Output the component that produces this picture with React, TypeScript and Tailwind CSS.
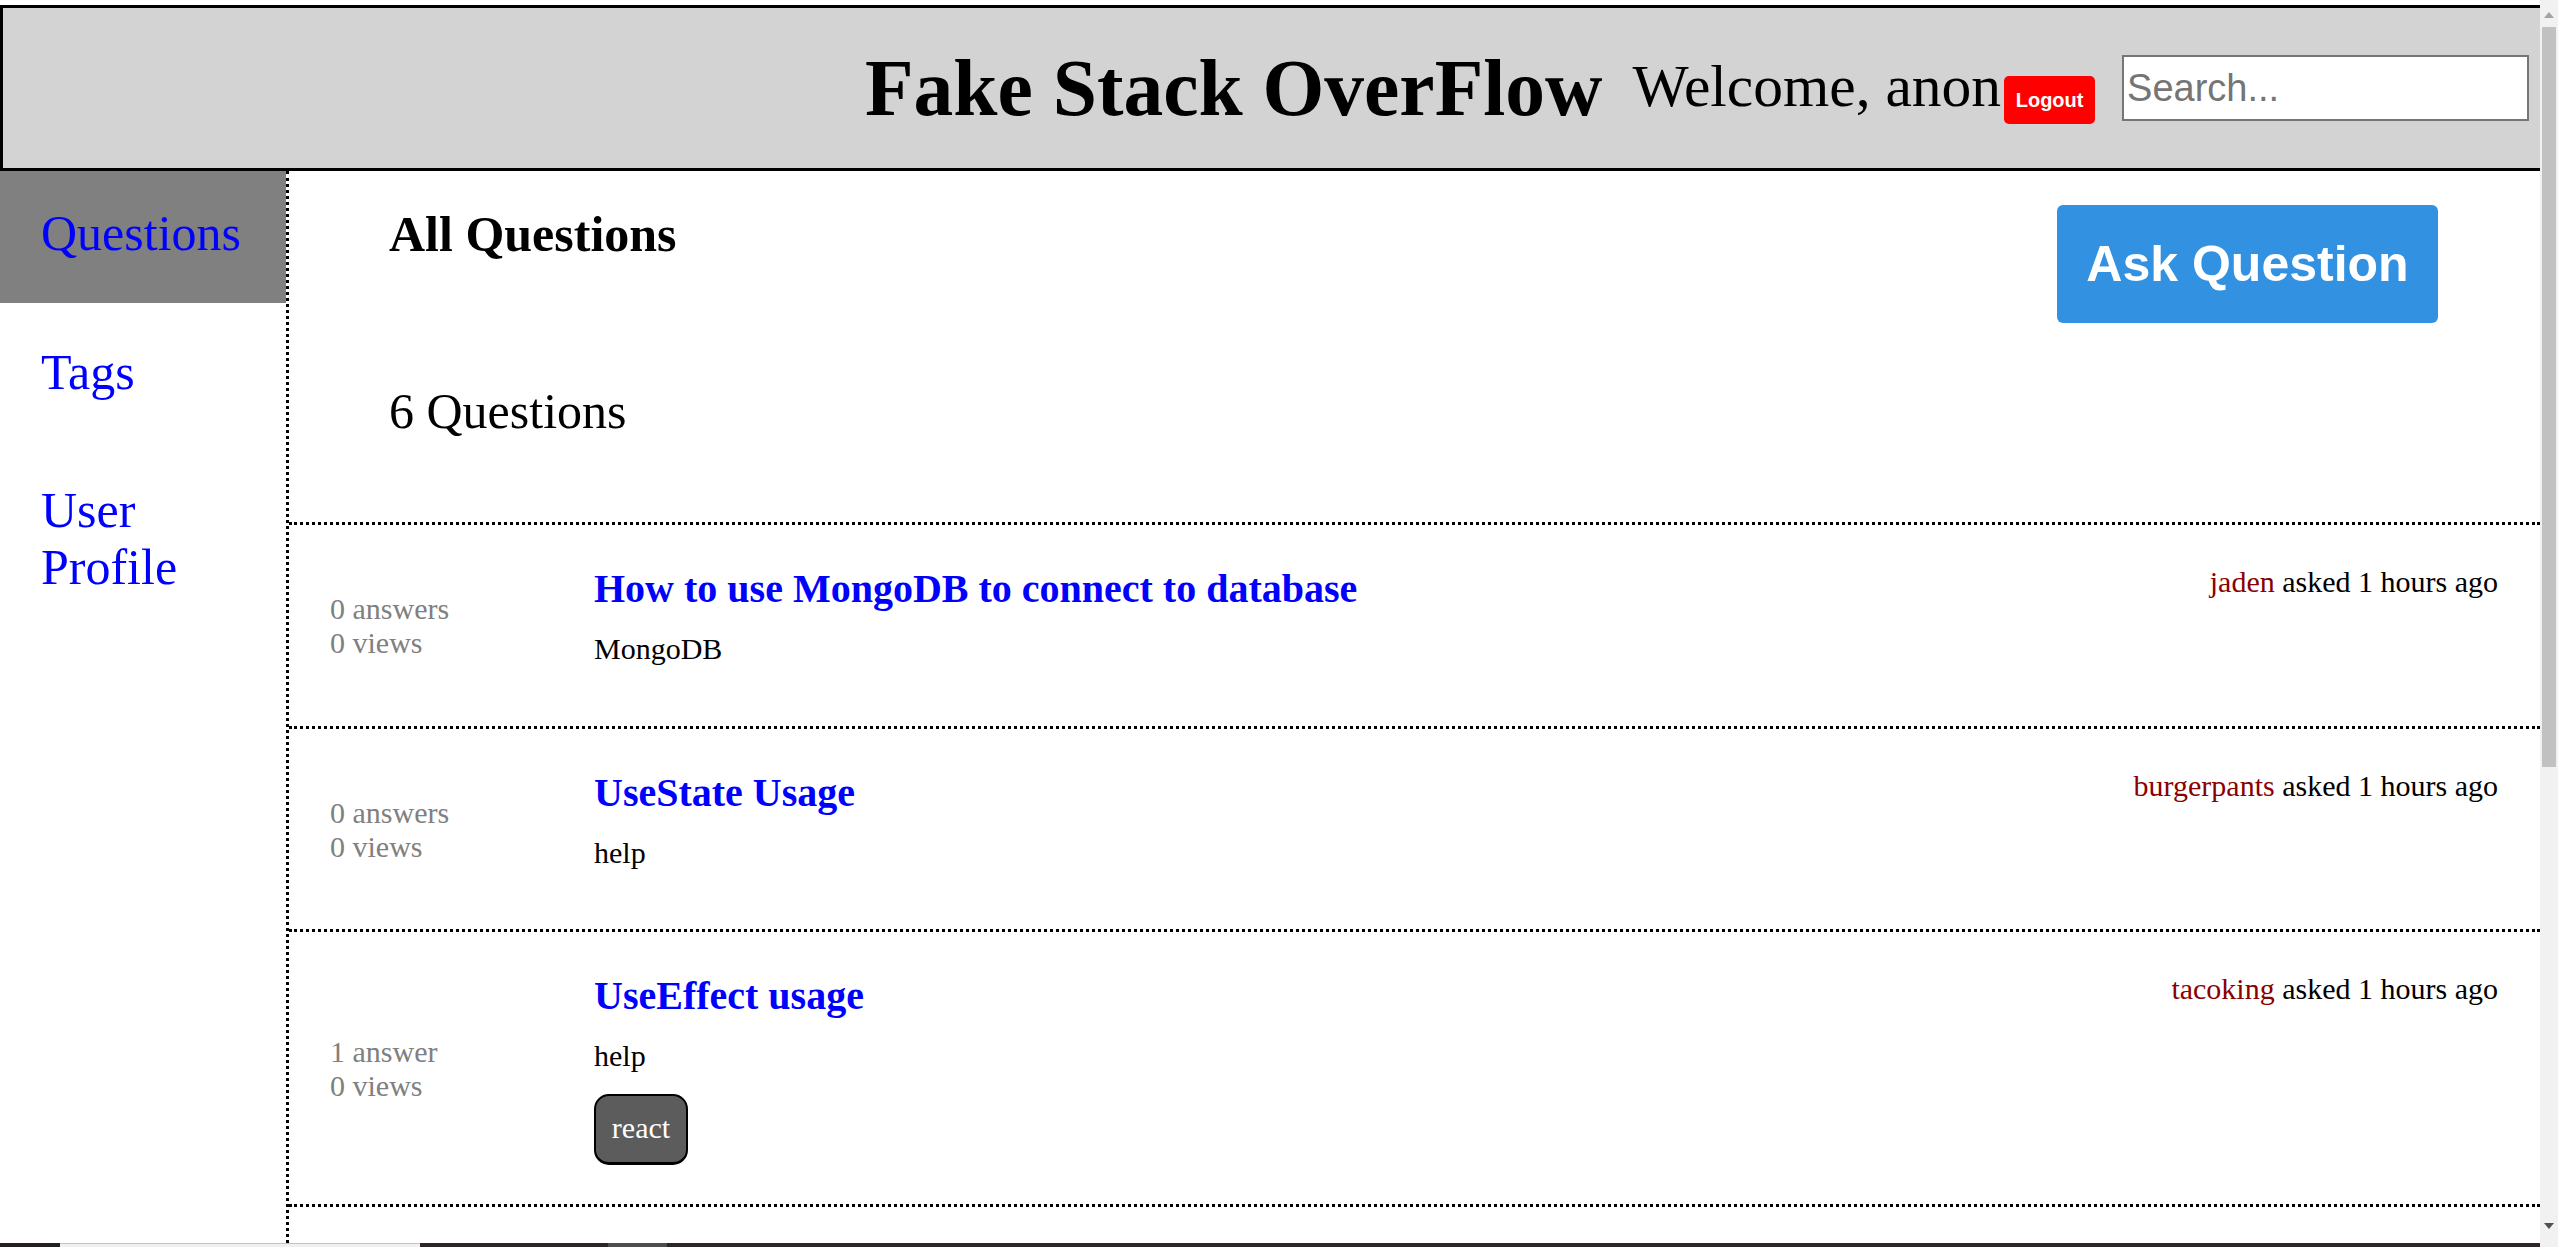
import React from "react";

const serif = "font-['Liberation_Serif','Times_New_Roman',serif]";
const sans = "font-['Liberation_Sans',Arial,sans-serif]";

type Q = {
  title: string;
  text: string;
  answers: string;
  views: string;
  user: string;
  tags: string[];
};

const questions: Q[] = [
  { title: "How to use MongoDB to connect to database", text: "MongoDB", answers: "0 answers", views: "0 views", user: "jaden", tags: [] },
  { title: "UseState Usage", text: "help", answers: "0 answers", views: "0 views", user: "burgerpants", tags: [] },
  { title: "UseEffect usage", text: "help", answers: "1 answer", views: "0 views", user: "tacoking", tags: ["react"] },
];

function QuestionRow({ q }: { q: Q }) {
  return (
    <div className="flex border-t-[3px] border-dotted border-black pl-[41px] pr-[42px] pt-[41px] pb-[39px]">
      <div className="w-[264px] shrink-0 self-center text-[30px] leading-[34px] text-[#808080]">
        <div>{q.answers}</div>
        <div>{q.views}</div>
      </div>
      <div className="flex-1 min-w-0">
        <div className="text-[40px] leading-[46px] font-bold text-[#0000ff]">{q.title}</div>
        <div className="mt-[20px] text-[30px] leading-[34.5px] text-black">{q.text}</div>
        <div className="mt-[20px] flex gap-[10px]">
          {q.tags.map((t) => (
            <div
              key={t}
              className="flex h-[71px] w-[94px] items-center justify-center rounded-[15px] border-2 border-b-[3px] border-black bg-[#5c5c5c] text-[30px] leading-[34.5px] text-white"
            >
              {t}
            </div>
          ))}
        </div>
      </div>
      <div className="-mt-[1px] self-start whitespace-nowrap text-right text-[30px] leading-[34.5px] text-black">
        <span className="text-[#8b0000]">{q.user}</span> asked 1 hours ago
      </div>
    </div>
  );
}

export default function App() {
  return (
    <div className={`flex h-[1247px] w-full overflow-hidden bg-white ${serif}`}>
      <div className="flex min-w-0 flex-1 flex-col">
        <div className="flex min-h-0 flex-1 flex-col overflow-hidden pt-[5px]">
          {/* Header */}
          <div className="flex h-[166px] shrink-0 items-center border-y-[3px] border-l-[3px] border-black bg-[#d3d3d3] pl-[862px]">
            <div className="whitespace-nowrap text-[79.5px] font-bold leading-[91px] text-black">Fake Stack OverFlow</div>
            <div className="ml-[30px] -mt-[4px] whitespace-nowrap text-[59.5px] leading-[68px] text-black">Welcome, anon</div>
            <button
              className={`ml-[3px] mt-[24px] flex h-[48px] w-[91px] items-center justify-center rounded-[5px] bg-[#ff0000] text-[20px] font-bold text-white ${sans}`}
            >
              Logout
            </button>
            <input
              type="text"
              placeholder="Search..."
              className={`ml-[27px] h-[66px] w-[407px] border-2 border-[#767676] bg-white px-[3px] text-[38px] text-black outline-none placeholder:text-[#757575] ${sans}`}
            />
          </div>

          {/* Body */}
          <div className="flex min-h-0 flex-1">
            {/* Sidebar */}
            <div className="w-[289px] shrink-0 border-r-[3px] border-dotted border-black">
              <div className="h-[132px] bg-[#808080] pl-[41px] pt-[34px] text-[50px] leading-[57.5px] text-[#0000ff]">Questions</div>
              <div className="h-[138px] pl-[41px] pt-[40.5px] text-[50px] leading-[57.5px] text-[#0000ff]">Tags</div>
              <div className="h-[160px] pl-[41px] pt-[40.5px] text-[50px] leading-[57.5px] text-[#0000ff]">
                <div className="max-w-[210px]">User Profile</div>
              </div>
            </div>

            {/* Main */}
            <div className="flex min-w-0 flex-1 flex-col">
              <div className="pl-[100px] pr-[102px] pt-[35px] pb-[81.5px]">
                <div className="flex items-start justify-between">
                  <div className="text-[50px] font-bold leading-[57.5px] text-black">All Questions</div>
                  <button
                    className={`-mt-[1px] flex h-[118px] w-[381px] items-center justify-center rounded-[6px] bg-[#3291e1] text-[50px] font-bold text-white ${sans}`}
                  >
                    Ask Question
                  </button>
                </div>
                <div className="mt-[60px] text-[50px] leading-[57.5px] text-black">6 Questions</div>
              </div>
              <div className="flex flex-col">
                {questions.map((q, i) => (
                  <QuestionRow key={i} q={q} />
                ))}
                <div className="h-[80px] border-t-[3px] border-dotted border-black" />
              </div>
            </div>
          </div>
        </div>
        {/* bottom strip */}
        <div className="flex h-[4px] shrink-0">
          <div className="w-[60px] bg-[#231f20]" />
          <div className="w-[360px] border-t border-[#c4c4c4] bg-[#f0f0f0]" />
          <div className="w-[188px] bg-[#2b2525]" />
          <div className="w-[59px] bg-[#4d4d4d]" />
          <div className="flex-1 bg-[#2c2626]" />
        </div>
      </div>

      {/* Fake scrollbar */}
      <div className="flex w-[18px] shrink-0 flex-col bg-[#f1f1f1]">
        <div className="flex h-[27px] items-start justify-center pt-[12px]">
          <svg width="10" height="6" viewBox="0 0 10 6">
            <polygon points="5,0 10,6 0,6" fill="#a3a3a3" />
          </svg>
        </div>
        <div className="mx-[2px] h-[740px] bg-[#c1c1c1]" />
        <div className="flex-1" />
        <div className="flex h-[27px] items-start justify-center pt-[3px]">
          <svg width="10" height="6" viewBox="0 0 10 6">
            <polygon points="0,0 10,0 5,6" fill="#505050" />
          </svg>
        </div>
      </div>
    </div>
  );
}
